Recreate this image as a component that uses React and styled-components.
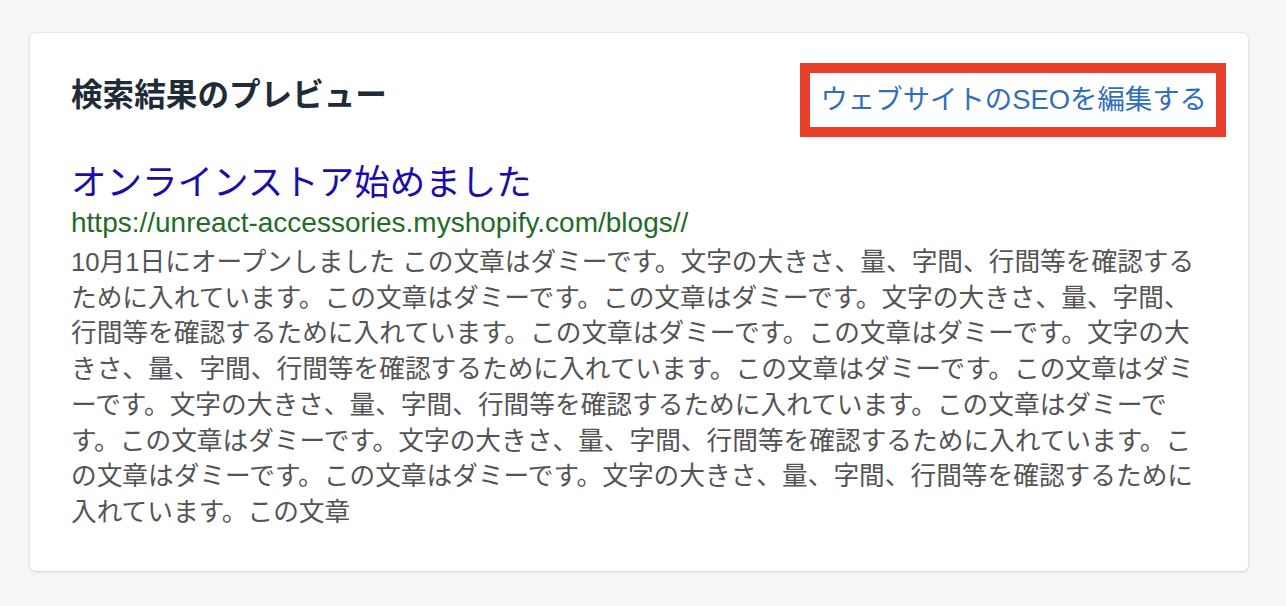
import styled, { createGlobalStyle } from 'styled-components';

const GlobalStyle = createGlobalStyle`
  html, body {
    margin: 0;
    padding: 0;
    background-color: #f4f6f8;
    font-family: "Liberation Sans", "Noto Sans CJK JP", sans-serif;
  }
`;

const Page = styled.div`
  width: 1286px;
  height: 606px;
  padding: 33px 38px 0 30px;
  box-sizing: border-box;
`;

const Card = styled.section`
  background-color: #fff;
  border-radius: 6px;
  box-shadow: 0 0 0 1px rgba(63, 63, 68, 0.05), 0 1px 3px 0 rgba(63, 63, 68, 0.15);
  padding: 30px 22px 40px 41px;
`;

const Header = styled.div`
  display: flex;
  justify-content: space-between;
  align-items: center;
`;

const Heading = styled.h2`
  margin: 0 0 8px;
  font-size: 31.6px;
  font-weight: 700;
  color: #212b36;
  line-height: 1.3;
`;

const EditLink = styled.a`
  display: inline-block;
  border: 10px solid #e8412b;
  padding: 8px 9px 8px 10px;
  font-size: 27.4px;
  line-height: 38px;
  color: #2f6fba;
  text-decoration: none;
  cursor: pointer;
`;

const Preview = styled.div`
  width: 1137px;
  padding-top: 23px;
`;

const ResultTitle = styled.div`
  font-size: 35.5px;
  line-height: 46px;
  color: #1a0dab;
`;

const ResultUrl = styled.div`
  font-size: 28px;
  line-height: 34px;
  color: #236b26;
  margin-bottom: 5px;
`;

const Description = styled.p`
  margin: 0;
  font-size: 25.7px;
  line-height: 35.7px;
  color: #545454;
`;

const dummy = 'この文章はダミーです。この文章はダミーです。文字の大きさ、量、字間、行間等を確認するために入れています。';

const description = `10月1日にオープンしました この文章はダミーです。文字の大きさ、量、字間、行間等を確認するために入れています。${dummy.repeat(5)}この文章`;

function App() {
  return (
    <>
      <GlobalStyle />
      <Page>
        <Card>
          <Header>
            <Heading>検索結果のプレビュー</Heading>
            <EditLink>ウェブサイトのSEOを編集する</EditLink>
          </Header>
          <Preview>
            <ResultTitle>オンラインストア始めました</ResultTitle>
            <ResultUrl>https://unreact-accessories.myshopify.com/blogs//</ResultUrl>
            <Description>{description}</Description>
          </Preview>
        </Card>
      </Page>
    </>
  );
}

export default App;
